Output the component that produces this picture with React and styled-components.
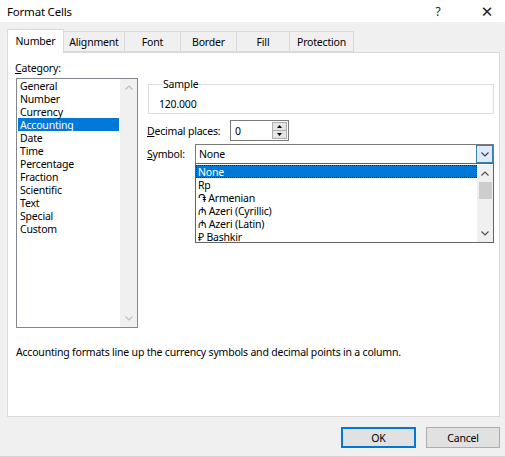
import styled, { createGlobalStyle } from "styled-components";

const GlobalStyle = createGlobalStyle`
  html, body { margin: 0; padding: 0; }
  body {
    font-family: "Noto Sans", "DejaVu Sans", sans-serif;
    font-size: 10.5px;
    letter-spacing: -0.2px;
    color: #000;
    background: #f0f0f0;
  }
  * { box-sizing: border-box; }
`;

const Window = styled.div`
  width: 505px;
  height: 457px;
  display: flex;
  flex-direction: column;
  background: #f0f0f0;
  border-bottom: 1px solid #d4d4d4;
`;

const TitleBar = styled.div`
  height: 22px;
  background: #fff;
  display: flex;
  align-items: center;
  padding-left: 7px;
  font-size: 11.5px;
`;

const Title = styled.div`
  flex: 1;
`;

const TitleButton = styled.div`
  width: ${(p) => p.$w}px;
  margin-right: ${(p) => p.$mr || 0}px;
  text-align: center;
  font-size: ${(p) => p.$fs || 12}px;
  color: #222;
`;

const Body = styled.div`
  padding: 7px 5px 0 7px;
`;

const TabStrip = styled.div`
  display: flex;
  align-items: flex-end;
  height: 23px;
  position: relative;
  z-index: 1;
`;

const Tab = styled.div`
  width: ${(p) => p.$w}px;
  height: ${(p) => (p.$active ? 24 : 21)}px;
  margin-left: ${(p) => (p.$first ? 0 : -1)}px;
  margin-bottom: ${(p) => (p.$active ? -1 : 0)}px;
  border: 1px solid #d9d9d9;
  border-bottom: ${(p) => (p.$active ? "none" : "1px solid #d9d9d9")};
  background: ${(p) => (p.$active ? "#fff" : "#f0f0f0")};
  display: flex;
  align-items: center;
  justify-content: center;
  padding-bottom: ${(p) => (p.$active ? 2 : 0)}px;
  position: relative;
  z-index: ${(p) => (p.$active ? 2 : 1)};
`;

const Panel = styled.div`
  width: 493px;
  height: 365px;
  background: #fff;
  border: 1px solid #d9d9d9;
  padding: 8px 7px 0 8px;
`;

const Columns = styled.div`
  display: grid;
  grid-template-columns: 122px 1fr;
  column-gap: 9px;
  align-items: start;
`;

const LeftCol = styled.div`
  display: flex;
  flex-direction: column;
`;

const RightCol = styled.div`
  padding-top: 16px;
  display: flex;
  flex-direction: column;
`;

const Label = styled.div`
  line-height: 14px;
  margin-left: ${(p) => p.$ml || 0}px;
  width: ${(p) => (p.$w ? `${p.$w}px` : "auto")};
  flex-shrink: 0;
`;

const Key = styled.span`
  text-decoration: underline;
`;

const ListBox = styled.div`
  margin-top: 3px;
  height: 250px;
  border: 1px solid #828790;
  display: flex;
`;

const Items = styled.div`
  flex: 1;
  padding: 0 1px;
`;

const Item = styled.div`
  height: 13px;
  line-height: 12px;
  padding: 1px 0 0 2px;
  white-space: nowrap;
  background: ${(p) => (p.$sel ? "#0078d7" : "transparent")};
  color: ${(p) => (p.$sel ? "#fff" : "#000")};
  outline: ${(p) => (p.$focus ? "1px dotted #2a2a2a" : "none")};
  outline-offset: -1px;
`;

const ScrollBar = styled.div`
  width: ${(p) => p.$w || 17}px;
  background: #f0f0f0;
  display: flex;
  flex-direction: column;
  align-items: center;
`;

const ArrowBox = styled.div`
  height: 17px;
  width: 100%;
  display: flex;
  align-items: center;
  justify-content: center;
`;

const Thumb = styled.div`
  width: 13px;
  height: 17px;
  background: #cdcdcd;
`;

const Spacer = styled.div`
  flex: 1;
`;

const GroupBox = styled.fieldset`
  margin: 0 0 0 1px;
  padding: 6px 10px 2px 10px;
  border: 1px solid #dcdcdc;
  min-width: 0;
`;

const Legend = styled.legend`
  padding: 0 1px;
  margin-left: 3px;
  line-height: 14px;
`;

const SampleValue = styled.div`
  line-height: 14px;
`;

const Row = styled.div`
  display: flex;
  align-items: center;
  margin-top: ${(p) => p.$mt}px;
`;

const SpinBox = styled.div`
  width: 59px;
  height: 21px;
  border: 1px solid #7a7a7a;
  display: flex;
  align-items: center;
  padding: 1px;
`;

const SpinText = styled.div`
  flex: 1;
  padding-left: 3px;
  line-height: 14px;
`;

const SpinButtons = styled.div`
  width: 15px;
  height: 17px;
  display: flex;
  flex-direction: column;
  border: 1px solid #adadad;
  background: #e5e5e5;
`;

const SpinHalf = styled.div`
  flex: 1;
  display: flex;
  align-items: center;
  justify-content: center;
  border-top: ${(p) => (p.$bottom ? "1px solid #adadad" : "none")};
`;

const Combo = styled.div`
  position: relative;
  width: 299px;
  height: 20px;
  border: 1px solid #7a7a7a;
  display: flex;
  align-items: center;
  padding-left: 3px;
`;

const ComboText = styled.div`
  flex: 1;
  line-height: 14px;
`;

const ComboButton = styled.div`
  width: 17px;
  height: 18px;
  border: 1px solid #3c7fb1;
  background: #dcecfc;
  display: flex;
  align-items: center;
  justify-content: center;
`;

const DropList = styled.div`
  position: absolute;
  top: 18px;
  left: -1px;
  width: 299px;
  height: 80px;
  border: 1px solid #646464;
  background: #fff;
  display: flex;
  padding: 1px 0 0 0;
  z-index: 5;
`;

const DropItems = styled.div`
  flex: 1;
`;

const Description = styled.div`
  margin-top: 17px;
  line-height: 14px;
`;

const Footer = styled.div`
  display: flex;
  justify-content: flex-end;
  gap: 10px;
  padding: 10px 5px 0 0;
`;

const Button = styled.div`
  width: ${(p) => p.$w}px;
  height: 21px;
  background: #e1e1e1;
  border: ${(p) => (p.$default ? "2px solid #0078d7" : "1px solid #adadad")};
  display: flex;
  align-items: center;
  justify-content: center;
`;

const Chevron = ({ up, color = "#606060" }) => (
  <svg width="8" height="5" viewBox="0 0 8 5">
    <polyline
      points={up ? "0.5,4.5 4,1 7.5,4.5" : "0.5,0.5 4,4 7.5,0.5"}
      fill="none"
      stroke={color}
      strokeWidth="1.2"
    />
  </svg>
);

const Tri = ({ up }) => (
  <svg width="5" height="3" viewBox="0 0 5 3">
    <polygon points={up ? "0,3 2.5,0 5,3" : "0,0 2.5,3 5,0"} fill="#000" />
  </svg>
);

const categories = [
  "General",
  "Number",
  "Currency",
  "Accounting",
  "Date",
  "Time",
  "Percentage",
  "Fraction",
  "Scientific",
  "Text",
  "Special",
  "Custom",
];

const symbols = [
  "None",
  "Rp",
  "֏ Armenian",
  "₼ Azeri (Cyrillic)",
  "₼ Azeri (Latin)",
  "₽ Bashkir",
];

const tabs = [
  ["Number", 57],
  ["Alignment", 62],
  ["Font", 57],
  ["Border", 57],
  ["Fill", 54],
  ["Protection", 65],
];

export default function App() {
  return (
    <>
      <GlobalStyle />
      <Window>
        <TitleBar>
          <Title>Format Cells</Title>
          <TitleButton $w={20} $mr={21}>?</TitleButton>
          <TitleButton $w={36} $fs={15}>✕</TitleButton>
        </TitleBar>
        <Body>
          <TabStrip>
            {tabs.map(([name, w], i) => (
              <Tab key={name} $w={w} $first={i === 0} $active={i === 0}>
                {name}
              </Tab>
            ))}
          </TabStrip>
          <Panel>
            <Columns>
              <LeftCol>
                <Label $ml={-1}>
                  <Key>C</Key>ategory:
                </Label>
                <ListBox>
                  <Items>
                    {categories.map((c) => (
                      <Item key={c} $sel={c === "Accounting"}>
                        {c}
                      </Item>
                    ))}
                  </Items>
                  <ScrollBar>
                    <ArrowBox>
                      <Chevron up color="#c0c0c0" />
                    </ArrowBox>
                    <Spacer />
                    <ArrowBox>
                      <Chevron color="#c0c0c0" />
                    </ArrowBox>
                  </ScrollBar>
                </ListBox>
              </LeftCol>
              <RightCol>
                <GroupBox>
                  <Legend>Sample</Legend>
                  <SampleValue>120.000</SampleValue>
                </GroupBox>
                <Row $mt={6}>
                  <Label $w={83}>
                    <Key>D</Key>ecimal places:
                  </Label>
                  <SpinBox>
                    <SpinText>0</SpinText>
                    <SpinButtons>
                      <SpinHalf>
                        <Tri up />
                      </SpinHalf>
                      <SpinHalf $bottom>
                        <Tri />
                      </SpinHalf>
                    </SpinButtons>
                  </SpinBox>
                </Row>
                <Row $mt={3}>
                  <Label $w={48}>
                    <Key>S</Key>ymbol:
                  </Label>
                  <Combo>
                    <ComboText>None</ComboText>
                    <ComboButton>
                      <Chevron color="#404040" />
                    </ComboButton>
                    <DropList>
                      <DropItems>
                        {symbols.map((s, i) => (
                          <Item key={s} $sel={i === 0} $focus={i === 0}>
                            {s}
                          </Item>
                        ))}
                      </DropItems>
                      <ScrollBar $w={16}>
                        <ArrowBox>
                          <Chevron up color="#505050" />
                        </ArrowBox>
                        <Thumb />
                        <Spacer />
                        <ArrowBox>
                          <Chevron color="#505050" />
                        </ArrowBox>
                      </ScrollBar>
                    </DropList>
                  </Combo>
                </Row>
              </RightCol>
            </Columns>
            <Description>
              Accounting formats line up the currency symbols and decimal points
              in a column.
            </Description>
          </Panel>
        </Body>
        <Footer>
          <Button $w={75} $default>
            OK
          </Button>
          <Button $w={74}>Cancel</Button>
        </Footer>
      </Window>
    </>
  );
}
